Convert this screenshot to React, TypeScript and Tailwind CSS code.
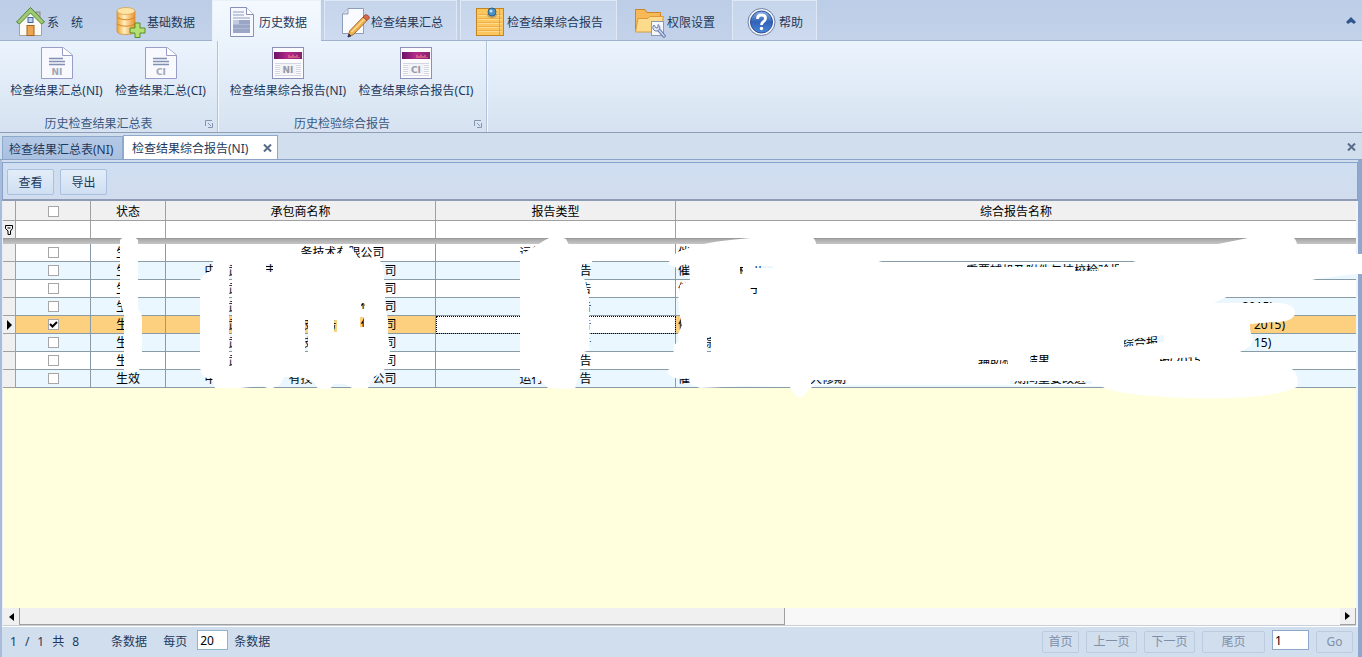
import { useState } from 'react';
import type { ReactNode } from 'react';

const gap = (n: number) => '\u3000'.repeat(n);

/* ---------- ribbon tab icons ---------- */

function HomeIcon() {
  return (
    <svg viewBox="0 0 32 32" className="size-8">
      <rect x="21" y="6" width="4" height="7" fill="#b9bcb4" stroke="#8b8b8b" />
      <path d="M4.500 16 L15.500 5 L26.500 16 V29.500 H4.500 Z" fill="#fbfaf4" stroke="#a9a491" />
      <path d="M1.500 16 L15.500 1.500 L29.500 16 L26.500 18 L15.500 7 L4.500 18 Z" fill="#9ccb74" stroke="#557f3a" strokeLinejoin="round" />
      <rect x="13" y="11.500" width="5" height="5" fill="#b9d3f2" stroke="#44659c" />
      <rect x="12" y="19.500" width="7" height="10" fill="#eda552" stroke="#a3621e" />
    </svg>
  );
}

function DatabaseIcon() {
  return (
    <svg viewBox="0 0 32 32" className="size-8">
      <defs>
        <linearGradient id="db" x1="0" x2="1">
          <stop offset="0" stopColor="#f0a030" />
          <stop offset="0.4" stopColor="#fff0c0" />
          <stop offset="1" stopColor="#ee8f2b" />
        </linearGradient>
      </defs>
      <path d="M2 5 V25 Q2 28.500 11 28.500 Q20 28.500 20 25 V5 Z" fill="url(#db)" stroke="#d08a30" strokeWidth="0.700" />
      <path d="M2 11.500 Q11 16 20 11.500 M2 18 Q11 22.500 20 18" fill="none" stroke="#d98a2a" strokeWidth="1.200" />
      <ellipse cx="11" cy="5" rx="9" ry="3.500" fill="#fde3a4" stroke="#d69a45" strokeWidth="0.700" />
      <path d="M20 17 H25 V22 H30 V27 H25 V31.500 H20 V27 H15 V22 H20 Z" fill="#b4e070" stroke="#568f2a" />
    </svg>
  );
}

function HistoryIcon() {
  return (
    <svg viewBox="0 0 32 32" className="size-8">
      <path d="M3.500 1.500 H19.500 L26.500 8.500 V30.500 H3.500 Z" fill="#f6f8fd" stroke="#8890b8" />
      <path d="M19.500 1.500 V8.500 H26.500" fill="#fff" stroke="#8890b8" />
      <path d="M6 6 H17 M6 9 H17 M6 12 H23" stroke="#b0bad6" strokeWidth="1.500" />
      <rect x="6" y="14" width="17" height="13" fill="#9aa6c6" />
      <path d="M6 14 H12 V18 H6 Z" fill="#c2cbe0" />
      <path d="M6 18.500 H23 M6 22.500 H23" stroke="#afb9d3" />
    </svg>
  );
}

function EditIcon() {
  return (
    <svg viewBox="0 0 32 32" className="size-8">
      <path d="M9 2.500 H24.500 V27.500 H3.500 V8 Z" fill="#f9fbff" stroke="#8f9dbd" />
      <path d="M9 2.500 V8 H3.500" fill="#d6deee" stroke="#8f9dbd" />
      <path d="M9 31 L10.500 25 L24 11 L28 14.500 L14.500 28.500 Z" fill="#f2b04c" stroke="#8a5a22" strokeWidth="0.800" />
      <path d="M12.500 26 L26 12.500" stroke="#fbdc96" strokeWidth="1.500" />
      <path d="M24 11 L26.500 8.500 Q30 9 30.500 12 L28 14.500 Z" fill="#d9694c" stroke="#8d3f2f" strokeWidth="0.800" />
      <path d="M9 31 L10 28 L12 30 Z" fill="#333a55" stroke="#333a55" />
    </svg>
  );
}

function NoteIcon() {
  return (
    <svg viewBox="0 0 32 32" className="size-8">
      <rect x="1.500" y="2.500" width="27" height="27" fill="#fbc75d" stroke="#c58424" />
      <path d="M3 8.500 H27 M3 12.500 H27 M3 16.500 H27 M3 20.500 H27 M3 24.500 H27" stroke="#e9a545" strokeWidth="0.700" />
      <path d="M3 9.500 H27 M3 13.500 H27 M3 17.500 H27 M3 21.500 H27 M3 25.500 H27" stroke="#fde3a0" strokeWidth="0.700" />
      <path d="M24.500 3 V29" stroke="#e2953a" strokeWidth="0.800" />
      <ellipse cx="17" cy="9" rx="5" ry="3" fill="#7d7c66" opacity="0.500" />
      <circle cx="17" cy="6" r="4" fill="#4c92c4" stroke="#2c5f8c" />
      <circle cx="16" cy="5" r="1.500" fill="#bfe0f5" />
    </svg>
  );
}

function FolderIcon() {
  return (
    <svg viewBox="0 0 32 32" className="size-8">
      <path d="M0.500 25 V3.500 H10 L12 6.500 H25.500 V25 Z" fill="#f6b955" stroke="#cf8427" />
      <path d="M0.500 26 L3 12.500 H13 L15 10.500 H28.500 L26 26 Z" fill="#fddb8d" stroke="#dc9a3d" />
      <rect x="16.500" y="15.500" width="12" height="14" fill="#f5f7fb" stroke="#8e99b3" />
      <path d="M23 23 L29 30" stroke="#6a7fae" strokeWidth="3.500" strokeLinecap="round" />
      <path d="M23 23 L29 30" stroke="#c8d5ef" strokeWidth="1.500" strokeLinecap="round" />
      <path d="M19 19 A3.500 3.500 0 1 0 23 18.500 V21.500 L21 22 Z" fill="#dfe6f4" stroke="#6a7fae" />
    </svg>
  );
}

function HelpIcon() {
  return (
    <svg viewBox="0 0 32 32" className="size-8">
      <defs>
        <linearGradient id="hp" x1="0" x2="0" y1="0" y2="1">
          <stop offset="0" stopColor="#8db0e6" />
          <stop offset="0.5" stopColor="#2f62b8" />
          <stop offset="1" stopColor="#4a86d8" />
        </linearGradient>
      </defs>
      <circle cx="14.500" cy="16" r="13.500" fill="#f4f6fb" stroke="#6d7da5" />
      <circle cx="14.500" cy="16" r="11" fill="url(#hp)" stroke="#2c4f94" />
      <path d="M10.500 13 Q10.500 9 14.500 9 Q18.500 9 18.500 12.500 Q18.500 14.500 16 16 Q14.500 17 14.500 19" fill="none" stroke="#fff" strokeWidth="2.800" />
      <circle cx="14.500" cy="22.500" r="1.700" fill="#fff" />
    </svg>
  );
}

/* ---------- ribbon button icons ---------- */

function SummaryIcon({ code }: { code: string }) {
  return (
    <svg viewBox="0 0 32 32" className="size-8">
      <path d="M0.500 0.500 H22 L31.500 8 V31.500 H0.500 Z" fill="#f7f9fe" stroke="#9a9dc6" />
      <path d="M21.500 0.500 V8.500 H31.500" fill="#fff" stroke="#9a9dc6" />
      <path d="M8 11.500 H22 M8 14.500 H24 M8 17.500 H24" stroke="#8290b4" strokeWidth="1.500" />
      <text x="16" y="28" textAnchor="middle" fontSize="9" fontWeight="700" fill="#a2a5b5" fontFamily="DejaVu Sans">{code}</text>
    </svg>
  );
}

function ReportIcon({ code }: { code: string }) {
  return (
    <svg viewBox="0 0 32 32" className="size-8">
      <defs>
        <linearGradient id="rp" x1="0" x2="1">
          <stop offset="0" stopColor="#6d1264" />
          <stop offset="0.5" stopColor="#b52a8c" />
          <stop offset="1" stopColor="#86206f" />
        </linearGradient>
      </defs>
      <rect x="0.500" y="0.500" width="31" height="31" fill="#fbfbfe" stroke="#8f90b8" />
      <rect x="2" y="5" width="28" height="7" fill="url(#rp)" />
      <path d="M17 11 V8 M19 11 V9 M21 11 V7.500 M23 11 V9 M25 11 V8 M27 11 V10" stroke="#f08a8a" />
      <path d="M3 16.500 H29 M3 18.500 H29 M3 20.500 H29 M3 22.500 H29 M3 24.500 H29 M3 26.500 H29 M3 28.500 H29" stroke="#d3d6e0" />
      <rect x="8" y="17" width="16" height="10" fill="#f2f3f7" />
      <text x="16" y="26" textAnchor="middle" fontSize="9" fontWeight="700" fill="#9699a8" fontFamily="DejaVu Sans">{code}</text>
    </svg>
  );
}

type Tab = { name: string; icon: ReactNode; look: 'flat' | 'raised' | 'active' };

const tabs: Tab[] = [
  { name: '系\u3000统', icon: <HomeIcon />, look: 'flat' },
  { name: '基础数据', icon: <DatabaseIcon />, look: 'flat' },
  { name: '历史数据', icon: <HistoryIcon />, look: 'active' },
  { name: '检查结果汇总', icon: <EditIcon />, look: 'raised' },
  { name: '检查结果综合报告', icon: <NoteIcon />, look: 'raised' },
  { name: '权限设置', icon: <FolderIcon />, look: 'flat' },
  { name: '帮助', icon: <HelpIcon />, look: 'raised' },
];

const tabLook = {
  flat: 'border-transparent',
  raised: 'border-[#dfe8f5] bg-linear-to-b from-[#c6d5eb] to-[#cddaef]',
  active: 'border-[#e9f1fa] bg-linear-to-b from-[#f4f9fe] to-[#ebf3fc]',
};

function RibbonGroup({ title, width, children }: { title: string; width: string; children: ReactNode }) {
  return (
    <section className={'flex flex-col border-r border-[#b3c2d9] shadow-[1px_0_0_#f3f8fd] ' + width}>
      <div className="flex flex-1 items-start justify-center pt-1.5">{children}</div>
      <div className="relative flex h-4 items-center justify-center text-[#3b587f]">
        <h2 className="pr-5">{title}</h2>
        <button aria-label={title + '选项'} className="absolute right-1 top-1">
          <svg viewBox="0 0 8 8" className="size-2" fill="none" stroke="#8595b0">
            <path d="M0.500 6 V0.500 H7" />
            <path d="M3 3 L6 6 M7.500 3 V7.500 H3" />
          </svg>
        </button>
      </div>
    </section>
  );
}

function RibbonButton({ name, icon, width }: { name: string; icon: ReactNode; width: string }) {
  return (
    <button className={'flex flex-col items-center gap-1 whitespace-nowrap ' + width}>
      {icon}
      <span>{name}</span>
    </button>
  );
}

function CloseMark() {
  return (
    <svg viewBox="0 0 9 8" className="h-2 w-[9px]" stroke="#586b88" strokeWidth="2">
      <path d="M1 0.500 L8 7.500 M8 0.500 L1 7.500" />
    </svg>
  );
}

/* ---------- grid ---------- */

type Row = { status: string; company: string; kind: string; report: string };

const rows: Row[] = [
  { status: '生', company: gap(7) + '务技术有限公司', kind: '运行' + gap(4), report: '催' },
  { status: '生', company: '中' + gap(1) + '武' + gap(2) + '丰' + gap(9) + '司', kind: gap(5) + '告', report: '催' + gap(4) + '机组' + gap(17) + '重要辅机及附件与技校检验报' },
  { status: '生', company: gap(2) + '武' + gap(12) + '司', kind: gap(5) + '告', report: '催' + gap(5) + '子' },
  { status: '生', company: gap(2) + '武' + gap(10) + '作' + gap(1) + '司', kind: gap(5) + '告', report: gap(47) + '2015)' },
  { status: '生', company: gap(2) + '武' + gap(5) + '技' + gap(1) + '务' + gap(2) + '作' + gap(1) + '司', kind: gap(5) + '告', report: '催' + gap(47) + '2015)' },
  { status: '生', company: gap(2) + '武' + gap(5) + '技' + gap(6) + '司', kind: gap(5) + '告', report: gap(2) + '综' + gap(34) + '综合报' + gap(8) + '15)' },
  { status: '生', company: gap(2) + '武' + gap(12) + '司', kind: gap(5) + '告', report: gap(25) + '辅助机械结果' + gap(9) + '报(2015)' },
  { status: '生效', company: '中' + gap(6) + '有技' + gap(2) + '限' + gap(2) + '公司', kind: '运行' + gap(3) + '告', report: '催' + gap(10) + '大修期' + gap(14) + '期间重要改进' },
];

function Check({ label, checked, onChange }: { label: string; checked: boolean; onChange: () => void }) {
  return (
    <span className="relative mx-auto block size-[11px]">
      <input
        type="checkbox"
        aria-label={label}
        checked={checked}
        onChange={onChange}
        className="block size-[11px] appearance-none border border-[#a6a6a6] bg-white"
      />
      {checked && (
        <svg viewBox="0 0 11 11" className="pointer-events-none absolute inset-0 size-[11px]" fill="none" stroke="#000" strokeWidth="2">
          <path d="M2 5 L4.500 7.500 L9 3" />
        </svg>
      )}
    </span>
  );
}

const brush = [
  'M120 240 Q129 231 138 240 V310 Q142 312 142 320 V367 Q132 377 124 370 V315 L120 300 Z',
  'M213 254 Q216 248 222 249 H296 L301 254 H340 L343 248 H352 L358 258 L380 261 Q384 264 384 280 L386 312 Q389 318 388 333 L390 350 Q390 366 382 372 L374 377 L368 388 H352 L345 384 H334 L330 389 H318 L314 382 L300 377 H284 L280 385 L270 389 L262 386 L240 388 H215 L212 378 Q202 380 200 368 V280 Q206 272 213 270 Z M229 264 h3 v102 h-3 Z M266 264 h7 v8 h-7 Z M305 320 h3 v38 h-3 Z M334 320 h3 v12 h-3 Z M361 303 h4 v6 h-4 Z M360 317 h4 v10 h-4 Z',
  'M520 255 L534 247 L545 240 Q555 234 566 239 L570 247 L588 250 Q593 255 592 263 L582 264 L581 276 L585 280 L589 298 L590 350 L581 353 L580 372 L575 389 H567 L548 388 L542 382 L536 377 H520 Z M558 361 h5 v3 h-5 Z',
  'M668 264 Q672 254 680 251 Q700 243 730 240 L750 238 Q780 228 812 237 Q816 240 816 244 L826 250 Q850 253 882 262 H1133 Q1146 258 1160 252 Q1200 249 1218 244 L1248 238 Q1270 233 1294 238 Q1298 242 1297 250 L1355 254 H1362 V274 H1355 L1316 279 Q1290 286 1250 290 Q1225 296 1214 303 H1280 Q1296 305 1295 314 Q1292 322 1275 322 L1250 324 Q1249 330 1253 338 L1250 346 L1240 352 V356 Q1260 362 1292 369 Q1300 376 1297 387 Q1270 400 1190 398 Q1120 396 1100 386 L1060 385 H815 L808 390 Q803 400 796 396 L790 387 L745 386 L700 388 L690 384 V378 L682 379 Q668 378 668 371 L673 360 L674 345 L679 341 L678 334 L682 325 L680 316 L678 300 L680 285 L690 280 V266 L684 264 L677 268 Z M740 267 h3 v7 h-3 Z M755 266 h18 v2 h-18 Z M967 264 h108 v3 h-108 Z M1075 264 h24 v7 h-24 Z M1099 264 h20 v3 h-20 Z M750 288 h7 v6 h-7 Z M707 337 h4 v20 h-4 Z M1124 340 l40 -5 v7 l-40 5 Z M978 360 h30 v4 h-30 Z M1030 355 h20 l-2 7 h-18 Z M1160 359 l40 -2 v4 h-40 Z M811 380 h36 v4 h-36 Z M1010 381 h82 v3 h-82 Z',
];

function Redaction() {
  return (
    <svg
      aria-hidden="true"
      viewBox="0 201 1362 200"
      className="pointer-events-none absolute left-0 top-0 h-[200px] w-[1362px] max-w-none"
      fill="#fff"
      fillRule="evenodd"
    >
      {brush.map((d) => (
        <path key={d} d={d} />
      ))}
    </svg>
  );
}

const cell = 'border-r border-b border-[#8a9ba8] p-0 text-center overflow-hidden whitespace-pre';
const headCell = 'border-r border-b border-[#a0a0a0] bg-[#f0f0f0] p-0 pt-0.5 text-center font-normal';

function Grid() {
  const [marked, setMarked] = useState<boolean[]>(rows.map((_, i) => i === 4));
  const all = marked.every(Boolean);
  return (
    <table className="w-full table-fixed border-separate border-spacing-0 text-black">
      <colgroup>
        <col className="w-[13px]" />
        <col className="w-[75px]" />
        <col className="w-[75px]" />
        <col className="w-[270px]" />
        <col className="w-[240px]" />
        <col />
      </colgroup>
      <thead>
        <tr className="h-5">
          <th className={headCell} />
          <th className={headCell}>
            <Check label="全选" checked={all} onChange={() => setMarked(rows.map(() => !all))} />
          </th>
          <th className={headCell}>状态</th>
          <th className={headCell}>承包商名称</th>
          <th className={headCell}>报告类型</th>
          <th className="border-b border-[#a0a0a0] bg-[#f0f0f0] p-0 pt-0.5 text-center font-normal">综合报告名称</th>
        </tr>
        <tr className="h-[17px] bg-white">
          <td className="border-r border-[#a0a0a0] bg-[#f0f0f0] p-0">
            <svg viewBox="0 0 8 10" className="mx-auto h-2.5 w-2" fill="none" stroke="#000">
              <path d="M0.500 0.500 H7.500 V3.500 L5.500 6 V9.500 H3 V6 L0.500 3.500 Z M2.500 3 H5.500" />
            </svg>
          </td>
          <td className="border-r border-[#a0a0a0] p-0" />
          <td className="border-r border-[#a0a0a0] p-0" />
          <td className="border-r border-[#a0a0a0] p-0" />
          <td className="border-r border-[#a0a0a0] p-0" />
          <td className="p-0" />
        </tr>
        <tr className="h-1.5">
          <td colSpan={6} className="border-t border-[#9a9a9a] bg-linear-to-b from-[#a8a8a8] to-[#c6c6c6] p-0" />
        </tr>
      </thead>
      <tbody>
        {rows.map((row, i) => {
          const current = i === 4;
          const tone = current ? 'bg-[#fdd07f]' : i % 2 ? 'bg-[#eaf7fe]' : 'bg-white';
          return (
            <tr key={i} className={'h-[18px] leading-4 ' + tone}>
              <td className="border-r border-b border-[#a0a0a0] bg-[#f0f0f0] p-0">
                {current && (
                  <svg viewBox="0 0 5 10" className="mx-auto h-2.5 w-[5px]">
                    <path d="M0 0 L5 5 L0 10 Z" />
                  </svg>
                )}
              </td>
              <td className={cell}>
                <Check
                  label={'选择第' + (i + 1) + '行'}
                  checked={marked[i]}
                  onChange={() => setMarked(marked.map((m, k) => (k === i ? !m : m)))}
                />
              </td>
              <td className={cell}>{row.status.padEnd(2, '\u3000')}</td>
              <td className={cell}>{row.company.padStart(i ? 16 : 14, '\u3000')}</td>
              <td className={current ? cell + ' bg-white outline-1 -outline-offset-1 outline-dotted outline-black' : cell}>{row.kind}</td>
              <td className="overflow-hidden whitespace-pre border-b border-[#8a9ba8] p-0 pl-0.5 text-left">{row.report}</td>
            </tr>
          );
        })}
      </tbody>
    </table>
  );
}

const toolButton =
  'h-[26px] w-[47px] rounded-xs border border-[#a9c0de] bg-linear-to-b from-[#e3edf9] to-[#cfdff2] pt-0.5 text-[#1e395b]';
const pageButton = 'h-[22px] rounded-xs border border-[#bccbe0] text-[#7f8fa8]';

export default function App() {
  return (
    <div className="flex min-h-screen w-full flex-col overflow-hidden bg-[#d1deee] font-['Noto_Sans','Noto_Sans_CJK_SC',sans-serif] text-[12px] leading-4 text-[#1e395b]">
      <nav className="flex h-[41px] items-stretch gap-[3px] border-b border-[#9fb3cf] bg-linear-to-b from-[#bccde7] to-[#c3d2e9]">
        {tabs.map((t) => (
          <button
            key={t.name}
            className={
              'flex shrink-0 items-center whitespace-nowrap border-x border-t pl-3.5 pr-[13px] pt-0.5 ' +
              tabLook[t.look] +
              (t.look === 'active' ? ' -mb-px' : '')
            }
          >
            {t.icon}
            <span className="pt-0.5">{t.name}</span>
          </button>
        ))}
        <button aria-label="折叠功能区" className="ml-auto px-1.5">
          <svg viewBox="0 0 10 7" className="h-[7px] w-2.5" fill="#2f568f">
            <path d="M0 5 L5 0 L10 5 L8 7 L5 5 L2 7 Z" />
          </svg>
        </button>
      </nav>

      <div className="flex h-[92px] items-stretch border-b border-[#8f9eb6] bg-linear-to-b from-[#ebf4fd] to-[#d6e2f1]">
        <RibbonGroup title="历史检查结果汇总表" width="w-[218px]">
          <RibbonButton name="检查结果汇总(NI)" width="w-[104px]" icon={<SummaryIcon code="NI" />} />
          <RibbonButton name="检查结果汇总(CI)" width="w-[104px]" icon={<SummaryIcon code="CI" />} />
        </RibbonGroup>
        <RibbonGroup title="历史检验综合报告" width="w-[269px]">
          <RibbonButton name="检查结果综合报告(NI)" width="w-[128px]" icon={<ReportIcon code="NI" />} />
          <RibbonButton name="检查结果综合报告(CI)" width="w-[128px]" icon={<ReportIcon code="CI" />} />
        </RibbonGroup>
      </div>

      <div className="flex h-[27px] items-end border-b border-[#8ba3c7] pl-0.5 pr-1.5">
        <button className="h-[23px] w-[121px] whitespace-nowrap border border-b-0 border-[#8fa9cd] bg-linear-to-b from-[#b4c9e6] to-[#a9c0e0] pl-1.5 pt-1 text-left">
          检查结果汇总表(NI)
        </button>
        <div className="flex h-6 w-[155px] items-center justify-between border-x border-t border-[#8fa9cd] bg-white pl-2 pr-[5px]">
          <button className="whitespace-nowrap pt-0.5">检查结果综合报告(NI)</button>
          <button aria-label="关闭标签">
            <CloseMark />
          </button>
        </div>
        <button aria-label="关闭" className="mb-2 ml-auto">
          <CloseMark />
        </button>
      </div>

      <main className="relative flex flex-1 flex-col">
        <div className="flex flex-1 flex-col border-l-2 border-r-4 border-l-[#a9bbd6] border-r-[#8fa7cd]">
          <div className="mt-0.5 flex h-[39px] items-center gap-1.5 border border-b-2 border-[#86a3cf] border-b-[#8e9cb5] bg-linear-to-b from-[#cfdef1] to-[#d1ddee] px-1 pt-0.5">
            <button className={toolButton}>查看</button>
            <button className={toolButton}>导出</button>
          </div>
          <div className="flex flex-1 flex-col border-l border-r-2 border-l-[#e8eef6] border-r-[#eef4fb] bg-[#ffffde]">
            <Grid />
            <div className="flex-1" />
            <div className="flex h-[18px] items-stretch border-b border-[#c9ced6] bg-[#f8f8f8]">
              <button aria-label="向左滚动" className="flex w-4 items-center justify-center bg-[#f0f0f0]">
                <svg viewBox="0 0 5 8" className="h-2 w-[5px]">
                  <path d="M5 0 L0 4 L5 8 Z" />
                </svg>
              </button>
              <div className="flex-1">
                <div className="h-full w-[58%] border border-t-0 border-[#a0a0a0] bg-[#f0f0f0]" />
              </div>
              <button aria-label="向右滚动" className="flex w-4 items-center justify-center border-r border-b border-[#a0a0a0] bg-[#f0f0f0]">
                <svg viewBox="0 0 5 8" className="h-2 w-[5px]">
                  <path d="M0 0 L5 4 L0 8 Z" />
                </svg>
              </button>
            </div>
          </div>
          <footer className="flex h-[31px] items-center justify-between border-t border-white pl-2 pr-[5px]">
            <div className="flex items-center">
              <span className="flex gap-2">
                <span>1</span>
                <span>/</span>
                <span>1</span>
              </span>
              <span className="ml-2">共</span>
              <span className="ml-2">8</span>
              <span className="ml-8">条数据</span>
              <label htmlFor="page-size" className="ml-4">每页</label>
              <input
                id="page-size"
                defaultValue="20"
                className="mb-1 ml-2.5 mr-1.5 h-5 w-[31px] border border-[#8fb3c9] bg-white px-0.5 text-black"
              />
              <span>条数据</span>
            </div>
            <div className="flex items-center gap-[7px]">
              <button className={pageButton + ' w-[37px]'}>首页</button>
              <button className={pageButton + ' w-[51px]'}>上一页</button>
              <button className={pageButton + ' w-[51px]'}>下一页</button>
              <button className={pageButton + ' w-[63px]'}>尾页</button>
              <input
                aria-label="页码"
                defaultValue="1"
                className="mb-1 h-5 w-[37px] border border-[#8fa9cd] bg-white px-0.5 text-black"
              />
              <button className={pageButton + ' w-[37px]'}>Go</button>
            </div>
          </footer>
        </div>
        <div className="pointer-events-none absolute inset-x-0 top-[41px]">
          <Redaction />
        </div>
      </main>
    </div>
  );
}
